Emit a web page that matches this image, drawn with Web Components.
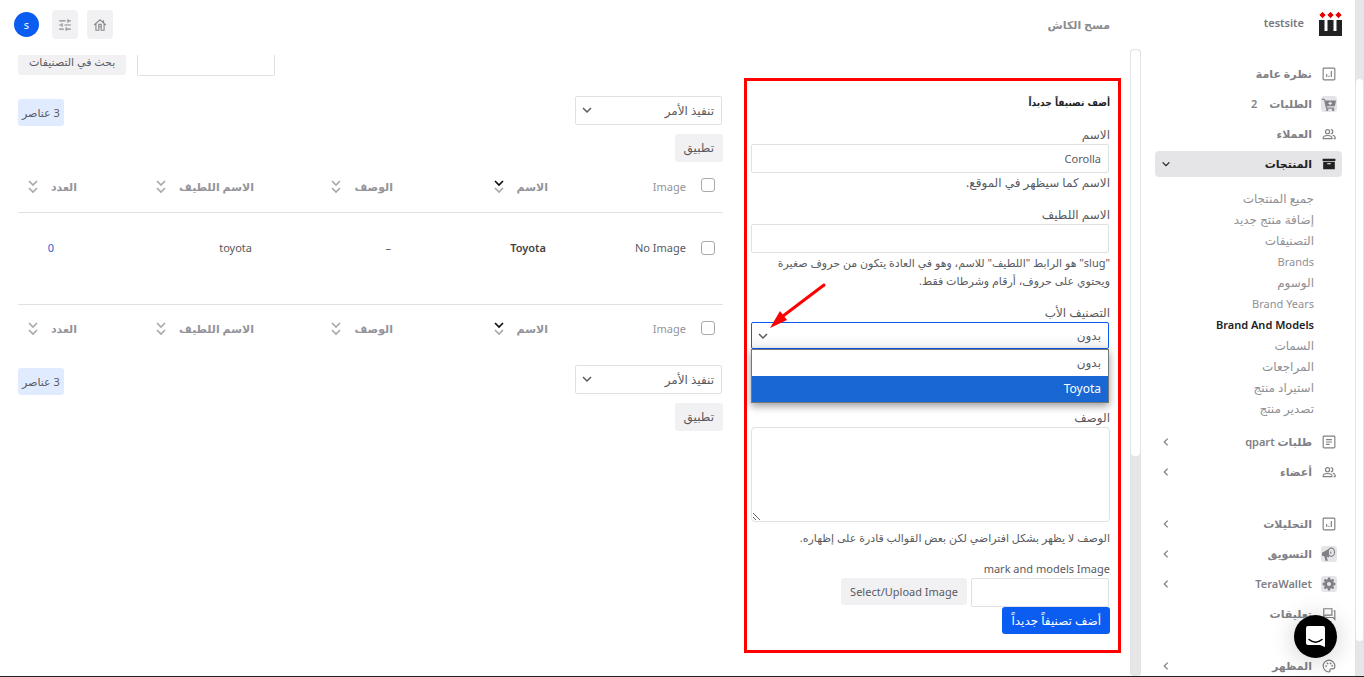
<!DOCTYPE html>
<html lang="ar" dir="rtl">
<head>
<meta charset="utf-8">
<title>testsite</title>
<style>
  html, body { margin: 0; height: 100%; }
  body {
    --text: #5a5a5e; --line: #e1e1e3; --soft: #f1f1f3; --blue: #0b5cf0;
    font: 11px/18px "Noto Sans", "DejaVu Sans", sans-serif;
    color: var(--text); background: #fff; overflow: hidden;
  }
</style>
</head>
<body>
<admin-shell>
  <scroll-rail slot="page-rail" style="--before:79;--thumb:563;--after:35"></scroll-rail>
  <side-nav slot="nav"></side-nav>
  <top-bar slot="top"></top-bar>
  <scroll-rail slot="pane-rail" style="--before:0;--thumb:407;--after:220"></scroll-rail>
  <add-term-form slot="form"></add-term-form>
  <terms-list slot="list"></terms-list>
</admin-shell>
<chat-launcher></chat-launcher>

<script>
const define = (name, css, html) => customElements.define(name, class extends HTMLElement {
  connectedCallback() {
    if (this.shadowRoot) return;
    const root = this.attachShadow({ mode: 'open' });
    root.innerHTML = `<style>*{box-sizing:border-box}a{color:inherit;text-decoration:none}button,input,select,textarea{font:inherit;color:inherit;margin:0}${css}</style>` +
      (typeof html === 'function' ? html(this) : html);
  }
});

const ICONS = {
  chart: '<rect x="2" y="2" width="20" height="20" rx="1.5"/><path d="M8 17v-5M12 17v-2M12 12v-.5M16 17V7"/>',
  cart: '<g fill="currentColor" stroke="none"><path d="M0 3h4.500l1 3H24l-2 10H8.500l.5 2H21v2H7L3.500 5H0z"/><circle cx="9" cy="22" r="2"/><circle cx="19" cy="22" r="2"/></g><path d="M14 8v6M11 11h6" stroke="#e9e9ec"/>',
  people: '<circle cx="9.500" cy="8" r="3.500"/><path d="M2 20v-1.500c0-2.500 4-4 7.500-4s7.500 1.500 7.500 4V20zM15 4.500a3.500 3.500 0 0 1 0 7M18.500 14c2 .7 4 2 4 3.500V20H20"/>',
  box: '<g fill="currentColor" stroke="none"><path d="M1 3h22v4H1zM2 8h20v13H2z"/></g><path d="M9 11.500h6" stroke="#e5e5e8"/>',
  doc: '<rect x="2" y="2" width="20" height="20" rx="1.500"/><path d="M7 8h10M7 12h10M7 16h6"/>',
  horn: '<g fill="currentColor" stroke="none"><path d="M0 10l12-7v15l-4-1.500 2 7H6L4 16l-4-1z"/></g><ellipse cx="16" cy="9" rx="5.500" ry="7"/><path d="M15 7.500v4"/>',
  gear: '<circle cx="12" cy="12" r="6" stroke-width="5"/><path d="M12 1v4M12 19v4M1 12h4M19 12h4M4.200 4.200l3 3M16.800 16.800l3 3M4.200 19.800l3-3M16.800 7.200l3-3" stroke-width="4"/>',
  chat: '<path d="M3 3h14v11H6l-3 3zM20 6.500h2V21l-3-3H7v-1.500"/>',
  palette: '<path d="M12 2a10 10 0 1 0 0 20c1.500 0 2.200-1 1.700-2.200-.6-1.500.3-2.800 1.800-2.800H18c2.500 0 4-1.800 4-4.500C22 6.500 17.500 2 12 2z"/><g fill="currentColor" stroke="none"><circle cx="7" cy="12" r="1.500"/><circle cx="9.500" cy="7.500" r="1.500"/><circle cx="14.500" cy="7.500" r="1.500"/><circle cx="17.500" cy="11.500" r="1.500"/></g>',
  down: '<path d="M4 8l8 8 8-8"/>',
  left: '<path d="M16 4l-8 8 8 8"/>',
  sliders: '<path d="M2 5h11M17 5h5M17 2v6M2 12h5M7 9v6M11 12h11M2 19h8M14 19h8M14 16v6"/>',
  home: '<path d="M2 12L12 3l10 9M5 10v11h5v-6h4v6h5V10M10 15v-4h4v4M18 8V4"/>'
};

define('ui-icon', ':host{display:inline-flex;flex:none}svg{display:block;width:var(--size,16px);height:var(--size,16px)}',
  el => `<svg viewBox="0 0 24 24" fill="none" stroke="currentColor" stroke-width="${el.getAttribute('weight') || 2}" aria-hidden="true">${ICONS[el.getAttribute('name')]}</svg>`);

define('admin-shell', `
  :host{display:grid;grid-template-columns:9px 214px minmax(0,1fr);grid-template-rows:minmax(0,1fr);height:100vh;box-sizing:border-box;border-bottom:1px solid #222}
  .main{display:flex;flex-direction:column;min-width:0;min-height:0}
  .pane{flex:1;display:grid;grid-template-columns:11px minmax(0,1fr);min-height:0}
  .content{display:grid;grid-template-columns:377fr 705fr;column-gap:21px;align-items:start;padding:6px 9px 0 18px;overflow:hidden}
  slot[name=nav]{display:block;overflow:hidden}`,
  `<slot name="page-rail"></slot><slot name="nav"></slot>
   <div class="main"><slot name="top"></slot>
     <div class="pane"><slot name="pane-rail"></slot><div class="content"><slot name="form"></slot><slot name="list"></slot></div></div>
   </div>`);

define('scroll-rail', `
  :host{display:flex;flex-direction:column;background:#e6e6e9;border:solid #e3e3e6;border-width:0 1px;box-sizing:border-box}
  i{display:block}.a{flex:var(--before)}.t{flex:var(--thumb);background:#fff;border-radius:4px}.b{flex:var(--after)}
  :host([slot=pane-rail]){border-top-width:1px;border-radius:4px}`,
  '<i class="a"></i><i class="t"></i><i class="b"></i>');

define('nav-item', `
  :host{display:block;margin-bottom:4px}
  a{display:flex;align-items:center;height:26px;padding:0 5px 0 6px;border-radius:4px;color:#808086;font-weight:600;gap:9px}
  :host([active]) a{background:#e5e5e8;color:#222}
  .badge{display:flex;border-radius:3px;padding:1px}
  :host([boxed]) .badge{background:#e5e5e8}
  ui-icon{--size:14px}
  .arrow{margin-inline-start:auto;--size:10px}`,
  el => `<a href="#"><span class="badge"><ui-icon name="${el.getAttribute('icon')}"></ui-icon></span><slot></slot>${
    el.hasAttribute('arrow') ? `<ui-icon class="arrow" weight="3" name="${el.getAttribute('arrow')}"></ui-icon>` : ''}</a>`);

define('nav-sub', ':host{display:block;font-size:12px}:host([lang=en]){font-size:11px}a{display:block;line-height:21px;color:#909095;padding-inline-start:28px}:host([current]) a{font-weight:600;color:#222}',
  '<a href="#"><slot></slot></a>');

define('side-nav', `
  :host{display:block;padding:11px 13px 0 14px}
  .brand{display:flex;align-items:flex-start;gap:15px;height:50px;color:#77777c;font-weight:600;line-height:24px}
  .brand svg{width:23px;height:25px}
  .subs{padding:7px 0 10px}
  .count{margin-inline-start:3px}
  .gap{height:22px}`,
  `<a class="brand" href="#"><svg viewBox="0 0 23 25" aria-hidden="true"><path fill="#222" d="M0 9h5.500v11h3V9h6v11h3V9H23v16H0z"/><path fill="#e50000" stroke="#e50000" stroke-linejoin="round" d="M3.500 1.300l2.700 2.700-2.700 2.700L.800 4zM11.500 1.300L14.200 4l-2.700 2.700L8.800 4zM19.500 1.300L22.200 4l-2.700 2.700L16.800 4z"/></svg><span>testsite</span></a>
  <nav>
    <nav-item icon="chart">نظرة عامة</nav-item>
    <nav-item icon="cart" boxed>الطلبات <span class="count">2</span></nav-item>
    <nav-item icon="people">العملاء</nav-item>
    <nav-item icon="box" active arrow="down">المنتجات</nav-item>
    <div class="subs">
      <nav-sub>جميع المنتجات</nav-sub><nav-sub>إضافة منتج جديد</nav-sub><nav-sub>التصنيفات</nav-sub><nav-sub lang="en">Brands</nav-sub><nav-sub>الوسوم</nav-sub><nav-sub lang="en">Brand Years</nav-sub><nav-sub lang="en" current>Brand And Models</nav-sub><nav-sub>السمات</nav-sub><nav-sub>المراجعات</nav-sub><nav-sub>استيراد منتج</nav-sub><nav-sub>تصدير منتج</nav-sub>
    </div>
    <nav-item icon="doc" arrow="left">طلبات qpart</nav-item>
    <nav-item icon="people" arrow="left">أعضاء</nav-item>
    <div class="gap"></div>
    <nav-item icon="chart" arrow="left">التحليلات</nav-item>
    <nav-item icon="horn" boxed arrow="left">التسويق</nav-item>
    <nav-item icon="gear" boxed arrow="left">TeraWallet</nav-item>
    <nav-item icon="chat">تعليقات</nav-item>
    <div class="gap"></div>
    <nav-item icon="palette" arrow="left">المظهر</nav-item>
  </nav>`);

define('top-bar', `
  :host{display:flex;align-items:center;justify-content:space-between;height:49px;padding:0 31px 0 14px}
  .cache{color:#8b8b90;font-weight:600}
  .tools{display:flex;align-items:center;gap:9px}
  button{display:flex;align-items:center;justify-content:center;width:26px;height:29px;padding:0;border:0;border-radius:4px;background:#f1f1f3;color:#8b8b90}
  .user{width:25px;height:25px;border-radius:50%;background:#0b5cf0;color:#fff;margin-inline-start:4px}`,
  `<a class="cache" href="#">مسح الكاش</a>
   <div class="tools"><button aria-label="الرئيسية"><ui-icon name="home" style="--size:14px"></ui-icon></button><button aria-label="الإعدادات"><ui-icon name="sliders" style="--size:14px"></ui-icon></button><button class="user">s</button></div>`);

const CONTROL = `
  input[type=text],select,textarea{display:block;width:100%;border:1px solid var(--line);border-radius:2px;background:#fff;padding:0 7px;outline:0}
  input[type=text]{height:29px}
  select{appearance:none;font-size:12px}
  .pick{position:relative}
  .pick ui-icon{position:absolute;left:6px;top:8px;--size:12px;pointer-events:none}
  .btn{border:0;border-radius:3px;background:var(--soft);height:28px;padding:0 9px;white-space:nowrap;font-size:12px}`;

define('add-term-form', CONTROL + `
  :host{display:block;margin-top:23px;border:3px solid #f00;padding:12px 8px 16px 4px}
  h2{font:700 10px/20px "DejaVu Sans Condensed","DejaVu Sans",sans-serif;color:#222;margin:0 0 13px}
  label{display:block;font-size:12px}
  label[lang=en],[lang=en].btn{font-size:11px}
  p{margin:1px 0 0;font-size:12px}
  .long,.field textarea + p{font-size:11px}
  .field{margin-bottom:14px}
  .field.last{margin-bottom:13px}
  .field input,.pick{margin-inline-start:1px;width:calc(100% - 1px)}
  .parent{margin-bottom:60px}
  .parent select{height:27px;border-color:#0b5cf0;background:linear-gradient(#fff 50%,#f3f3f3)}
  ul{position:absolute;inset:27px 0 auto 0;margin:0;padding:0;list-style:none;background:#fff;border:1px solid #777;box-shadow:0 3px 8px #0006}
  li{height:26px;line-height:26px;padding:0 7px;font-size:12px}
  li[aria-selected=true]{background:#1967d2;color:#fff}
  .arrow{position:absolute;left:16px;top:-40px;width:62px;height:48px}
  textarea{height:95px;border-radius:4px}
  .field textarea + p{margin-top:7px}
  .upload{display:flex;gap:4px}
  .upload input{width:138px;margin-inline-start:1px}
  .btn{height:27px}
  .primary{background:var(--blue);color:#fff;display:block}`,
  `<form>
    <h2>أضف تصنيفاً جديداً</h2>
    <div class="field"><label for="name">الاسم</label><input id="name" type="text" value="Corolla"><p>الاسم كما سيظهر في الموقع.</p></div>
    <div class="field"><label for="slug">الاسم اللطيف</label><input id="slug" type="text"><p class="long">"slug" هو الرابط "اللطيف" للاسم، وهو في العادة يتكون من حروف صغيرة ويحتوي على حروف، أرقام وشرطات فقط.</p></div>
    <div class="parent"><label for="parent">التصنيف الأب</label>
      <div class="pick"><select id="parent"><option>بدون</option></select><ui-icon name="down" weight="3"></ui-icon>
        <ul role="listbox"><li role="option">بدون</li><li role="option" aria-selected="true">Toyota</li></ul>
        <svg class="arrow" viewBox="0 0 62 48" aria-hidden="true"><path d="M57 3L16 34" stroke="#f00" stroke-width="3" stroke-linecap="round"/><path d="M3 46l10-17 7 9z" fill="#f00"/></svg>
      </div></div>
    <div class="field last"><label for="desc">الوصف</label><textarea id="desc"></textarea><p>الوصف لا يظهر بشكل افتراضي لكن بعض القوالب قادرة على إظهاره.</p></div>
    <label for="image" lang="en">mark and models Image</label>
    <div class="upload"><input id="image" type="text"><button class="btn" lang="en" type="button">Select/Upload Image</button></div>
    <button class="btn primary" type="button">أضف تصنيفاً جديداً</button>
  </form>`);

define('bulk-bar', CONTROL + `
  :host{display:flex;justify-content:space-between;align-items:flex-start;height:66px}
  .pick{width:147px;margin-bottom:9px;margin-inline-start:1px}
  select{height:29px}
  .count{margin-top:3px;height:27px;line-height:27px;padding:0 4px;border-radius:3px;background:#e0ebff}`,
  `<div><div class="pick"><select aria-label="تنفيذ الأمر"><option>تنفيذ الأمر</option></select><ui-icon name="down" weight="3"></ui-icon></div><button class="btn">تطبيق</button></div><span class="count">3 عناصر</span>`);

const sortHead = (t, on) => `<th scope="col"><a href="#">${t}<svg class="${on ? 'on' : ''}" viewBox="0 0 10 14" aria-hidden="true"><path d="M1 1l4 4 4-4"/><path d="M1 8l4 4 4-4"/></svg></a></th>`;
const headRow = id => `<tr><td><input type="checkbox" id="${id}" aria-label="تحديد الكل"></td><th scope="col" class="plain">Image</th>${sortHead('الاسم', 1)}${sortHead('الوصف')}${sortHead('الاسم اللطيف')}${sortHead('العدد')}</tr>`;

define('terms-list', CONTROL + `
  :host{display:block}
  .search{display:flex;justify-content:flex-end;gap:11px;margin-bottom:20px}
  .search input{width:138px;height:21px;flex:none;border-top:0;border-radius:0 0 2px 2px}
  .search .btn{flex:none;height:20px;line-height:14px;font-size:11px;padding:0 11px 6px;border-radius:0 0 3px 3px}
  table{width:100%;border-collapse:collapse;table-layout:fixed;margin-bottom:11px}
  td,th{padding:0;text-align:start;vertical-align:middle}
  thead tr,tfoot tr{height:50px;color:#94949a}
  thead td,tfoot td{padding-bottom:3px}
  tbody tr{height:92px;border:solid var(--line);border-width:1px 0}
  tbody td{padding:0 2px 20px 0}
  tbody td:nth-child(-n+2){padding-right:0}
  tbody td:last-child{padding-right:23px;color:#2a62d8}
  th{font-weight:600}
  .plain{font-weight:400}
  th a{display:flex;align-items:center;gap:13px;white-space:nowrap}
  th svg{width:10px;height:14px;fill:none;stroke:#a8a8ad;stroke-width:1.7;flex:none}
  th svg.on path:first-child{stroke:#111}
  td input{appearance:none;display:block;width:14px;height:14px;border:1px solid #aaa;border-radius:3px;margin-inline-start:8px;background:#fff}
  b{color:#444;font-weight:600}`,
  `<div class="search"><input type="text" aria-label="بحث"><button class="btn">بحث في التصنيفات</button></div>
   <bulk-bar></bulk-bar>
   <table><colgroup><col style="width:37px"><col style="width:138px"><col style="width:155px"><col style="width:139px"><col style="width:177px"><col style="width:59px"></colgroup>
   <thead>${headRow('all-top')}</thead>
   <tbody><tr><td><input type="checkbox" aria-label="Toyota"></td><td>No Image</td><td><a href="#"><b>Toyota</b></a></td><td>–</td><td>toyota</td><td><a href="#">0</a></td></tr></tbody>
   <tfoot>${headRow('all-bottom')}</tfoot></table>
   <bulk-bar></bulk-bar>`);

define('chat-launcher', `
  :host{position:fixed;right:27px;bottom:19px}
  button{display:flex;align-items:center;justify-content:center;width:43px;height:43px;padding:0;border:0;border-radius:50%;background:#000;box-shadow:0 2px 24px #0003}
  svg{width:19px;height:21px}`,
  `<button aria-label="دردشة"><svg viewBox="0 0 19 21"><path fill="#fff" d="M2 0h15A2 2 0 0 1 19 2V21l-5-2H2A2 2 0 0 1 0 17V2A2 2 0 0 1 2 0z"/><path d="M3 13.500c4 3.300 9 3.300 13 0" fill="none" stroke="#000" stroke-width="1.500" stroke-linecap="round"/></svg></button>`);
</script>
</body>
</html>
